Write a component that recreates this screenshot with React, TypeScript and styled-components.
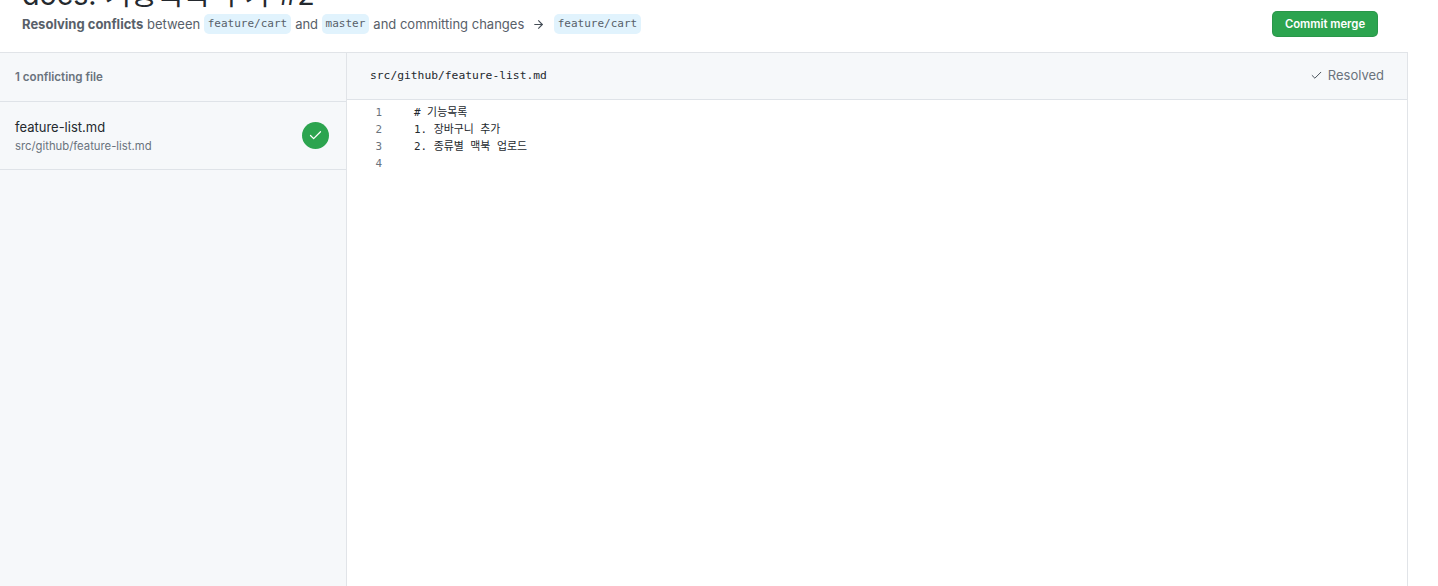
import React from "react";
import styled, { createGlobalStyle } from "styled-components";
import { ArrowRight, Check } from "lucide-react";

const sans = `Inter, "Liberation Sans", "Noto Sans CJK KR", sans-serif`;
const mono = `"DejaVu Sans Mono", "Liberation Mono", "Noto Sans CJK KR", monospace`;

const GlobalStyle = createGlobalStyle`
  html, body {
    margin: 0;
    padding: 0;
    height: 586px;
    overflow: hidden;
    background: #fff;
    font-family: ${sans};
    color: #24292e;
  }
`;

const Page = styled.div`
  width: 1408px;
  height: 586px;
  display: flex;
  flex-direction: column;
  overflow: hidden;
`;

const Header = styled.header`
  height: 52px;
  padding: 0 30px 0 22px;
  display: flex;
  justify-content: space-between;
  align-items: flex-end;
  box-sizing: border-box;
  flex: none;
`;

const HeaderText = styled.div`
  display: flex;
  flex-direction: column;
  justify-content: flex-end;
  padding-bottom: 18px;
`;

const Title = styled.h1`
  margin: 0 0 4px;
  font-size: 28.7px;
  line-height: 30px;
  font-weight: 400;
  color: #24292e;
  white-space: nowrap;
`;

const Summary = styled.div`
  display: flex;
  align-items: center;
  font-size: 13px;
  line-height: 20px;
  color: #586069;
  white-space: pre;
`;

const Code = styled.code`
  font-family: ${mono};
  font-size: 11px;
  line-height: 20px;
  height: 20px;
  padding: 0 4px;
  margin: 0 4px 0 3.5px;
  border-radius: 5px;
  background: #e1f3fd;
  color: #586069;
`;

const CommitButton = styled.button`
  width: 106px;
  height: 26px;
  margin-bottom: 15px;
  border: 1px solid rgba(27, 31, 35, 0.1);
  border-radius: 5px;
  background: #2ca44f;
  color: #fff;
  font-family: ${sans};
  font-size: 11.3px;
  font-weight: 600;
  padding: 0;
`;

const Panels = styled.main`
  flex: 1;
  display: grid;
  grid-template-columns: 347px 1fr;
  border-top: 1px solid #e1e4e8;
  border-right: 1px solid #e1e4e8;
`;

const Sidebar = styled.aside`
  background: #f6f8fa;
  border-right: 1px solid #e1e4e8;
`;

const SidebarHeading = styled.div`
  height: 48px;
  padding-left: 15px;
  display: flex;
  align-items: center;
  border-bottom: 1px solid #dfe3e8;
  font-size: 11.6px;
  font-weight: 600;
  color: #6a737d;
`;

const FileRow = styled.div`
  height: 67px;
  padding: 0 17px 0 15px;
  display: flex;
  justify-content: space-between;
  align-items: center;
  border-bottom: 1px solid #dfe3e8;
`;

const FileName = styled.div`
  font-size: 13px;
  line-height: 18px;
  margin-bottom: 2px;
  color: #24292e;
`;

const FilePath = styled.div`
  font-size: 11.3px;
  line-height: 16px;
  color: #6a737d;
`;

const DoneBadge = styled.span`
  width: 27px;
  height: 27px;
  border-radius: 50%;
  background: #2ca44f;
  color: #fff;
  display: flex;
  align-items: center;
  justify-content: center;
`;

const Editor = styled.section`
  display: flex;
  flex-direction: column;
  min-width: 0;
`;

const EditorBar = styled.div`
  height: 44px;
  padding: 0 23px 2px 23px;
  display: flex;
  justify-content: space-between;
  align-items: center;
  box-sizing: content-box;
  background: #f6f8fa;
  border-bottom: 1px solid #dfe3e8;
`;

const EditorPath = styled.span`
  font-family: ${mono};
  font-size: 11.3px;
  color: #24292e;
`;

const Resolved = styled.span`
  display: flex;
  align-items: center;
  gap: 5px;
  font-size: 13px;
  color: #6a737d;
`;

const ResolvedCheck = styled(Check)`
  color: #444d56;
`;

const Lines = styled.div`
  padding-top: 4px;
`;

const Line = styled.div`
  display: flex;
  height: 17px;
  line-height: 17px;
  font-family: ${mono};
  font-size: 10.9px;
  white-space: pre;
`;

const LineNumber = styled.span`
  width: 35px;
  text-align: right;
  color: #6a737d;
  margin-right: 32px;
`;

const MergeArrow = styled(ArrowRight)`
  margin: 0 5px 0 8px;
  color: #444d56;
`;

const lines = ["# 기능목록", "1. 장바구니 추가", "2. 종류별 맥북 업로드", ""];

export default function App() {
  return (
    <>
      <GlobalStyle />
      <Page>
        <Header>
          <HeaderText>
            <Title>docs: 기능목록 추가 #2</Title>
            <Summary>
              <strong>Resolving conflicts</strong> between
              <Code>feature/cart</Code>and
              <Code>master</Code>and committing changes
              <MergeArrow size={13} strokeWidth={2} />
              <Code>feature/cart</Code>
            </Summary>
          </HeaderText>
          <CommitButton>Commit merge</CommitButton>
        </Header>
        <Panels>
          <Sidebar>
            <SidebarHeading>1 conflicting file</SidebarHeading>
            <FileRow>
              <div>
                <FileName>feature-list.md</FileName>
                <FilePath>src/github/feature-list.md</FilePath>
              </div>
              <DoneBadge>
                <Check size={15} strokeWidth={2} />
              </DoneBadge>
            </FileRow>
          </Sidebar>
          <Editor>
            <EditorBar>
              <EditorPath>src/github/feature-list.md</EditorPath>
              <Resolved>
                <ResolvedCheck size={13} strokeWidth={1.8} />
                Resolved
              </Resolved>
            </EditorBar>
            <Lines>
              {lines.map((text, i) => (
                <Line key={i}>
                  <LineNumber>{i + 1}</LineNumber>
                  {text}
                </Line>
              ))}
            </Lines>
          </Editor>
        </Panels>
      </Page>
    </>
  );
}
